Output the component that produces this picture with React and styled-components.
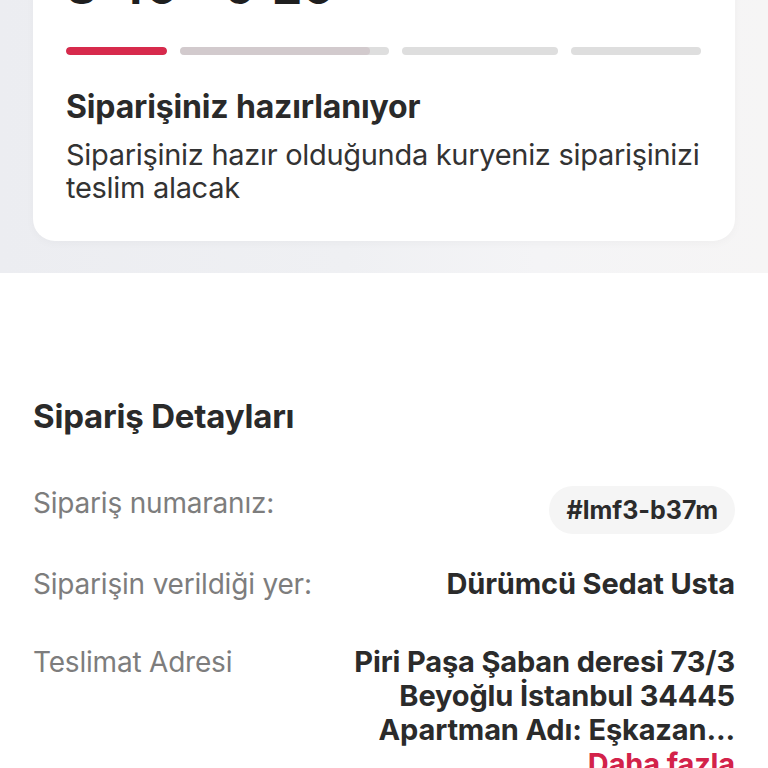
import React from "react";
import styled, { createGlobalStyle } from "styled-components";

const GlobalStyle = createGlobalStyle`
  html, body {
    margin: 0;
    padding: 0;
    background: #ffffff;
  }
  body {
    font-family: Inter, "Noto Sans", Arial, sans-serif;
    color: #2b2b2b;
    overflow: hidden;
  }
`;

const steps = [
  { fill: 100, active: true, width: 101 },
  { fill: 91, active: false, width: 209 },
  { fill: 0, active: false, width: 156 },
  { fill: 0, active: false, width: 130 },
];

const details = [
  { label: "Sipariş numaranız:", value: "#lmf3-b37m", pill: true },
  { label: "Siparişin verildiği yer:", value: "Dürümcü Sedat Usta" },
];

const App = () => {
  return (
    <Page>
      <GlobalStyle />
      <StatusArea>
        <Card>
          <TimeText>8:40 – 9:20</TimeText>
          <Steps>
            {steps.map((s, i) => (
              <Step key={i} $w={s.width}>
                <StepFill
                  $active={s.active}
                  style={{ width: `${s.fill}%` }}
                />
              </Step>
            ))}
          </Steps>
          <StatusTitle>Siparişiniz hazırlanıyor</StatusTitle>
          <StatusText>
            Siparişiniz hazır olduğunda kuryeniz siparişinizi teslim alacak
          </StatusText>
        </Card>
      </StatusArea>

      <Details>
        <Heading>Sipariş Detayları</Heading>
        {details.map((d) => (
          <Row key={d.label}>
            <Label>{d.label}</Label>
            {d.pill ? <Pill>{d.value}</Pill> : <Value>{d.value}</Value>}
          </Row>
        ))}
        <Row>
          <Label>Teslimat Adresi</Label>
          <Value>
            Piri Paşa Şaban deresi 73/3
            <br />
            Beyoğlu İstanbul 34445
            <br />
            Apartman Adı: Eşkazan...
            <br />
            <More>Daha fazla</More>
          </Value>
        </Row>
      </Details>
    </Page>
  );
};
export default App;

const Page = styled.div`
  width: 768px;
  height: 768px;
  overflow: hidden;
  display: flex;
  flex-direction: column;
`;

const StatusArea = styled.div`
  margin-top: -60px;
  padding: 0 33px 32px;
  background: linear-gradient(90deg, #ecedf1 0%, #eff0f3 45%, #f4f4f6 70%, #f6f5f5 100%);
`;

const Card = styled.div`
  background: #ffffff;
  border-radius: 22px;
  padding: 20px 33px 37px;
  box-shadow: 0 2px 10px rgba(0, 0, 0, 0.03);
`;

const TimeText = styled.div`
  font-size: 48px;
  font-weight: 700;
  line-height: 53px;
  color: #1f1f1f;
`;

const Steps = styled.div`
  display: flex;
  gap: 13px;
  margin-top: 34px;
`;

const Step = styled.div`
  width: ${(p) => p.$w}px;
  height: 8px;
  border-radius: 4px;
  background: #dedede;
  overflow: hidden;
`;

const StepFill = styled.div`
  height: 100%;
  border-radius: 4px;
  background: ${(p) => (p.$active ? "#d72a4c" : "#d2cacd")};
`;

const StatusTitle = styled.div`
  margin-top: 34px;
  font-size: 32px;
  font-weight: 700;
  line-height: 36px;
  color: #2a2a2a;
  letter-spacing: -0.15px;
`;

const StatusText = styled.div`
  margin-top: 13px;
  font-size: 29px;
  line-height: 33px;
  color: #333333;
  letter-spacing: -0.3px;
`;

const Details = styled.div`
  padding: 126px 33px 0;
  display: flex;
  flex-direction: column;
`;

const Heading = styled.div`
  font-size: 33px;
  font-weight: 700;
  line-height: 34px;
  color: #2a2a2a;
  letter-spacing: -0.2px;
  margin-bottom: 53px;
`;

const Row = styled.div`
  display: flex;
  justify-content: space-between;
  align-items: flex-start;
  min-height: 45px;
  margin-bottom: 33px;
`;

const Label = styled.div`
  font-size: 28px;
  line-height: 34px;
  color: #7d7d7d;
  letter-spacing: -0.2px;
`;

const Value = styled.div`
  font-size: 29px;
  font-weight: 700;
  line-height: 34px;
  color: #2b2b2b;
  text-align: right;
  letter-spacing: -0.15px;
`;

const Pill = styled.div`
  height: 48px;
  padding: 0 17px;
  border-radius: 24px;
  background: #f5f5f5;
  display: flex;
  align-items: center;
  font-size: 25px;
  font-weight: 700;
  color: #2b2b2b;
`;

const More = styled.span`
  color: #d3224a;
`;
